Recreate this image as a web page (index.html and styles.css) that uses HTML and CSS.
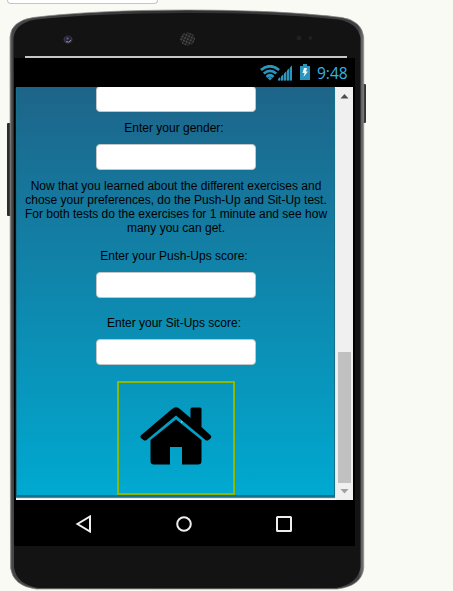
FILE: index.html
```
<!DOCTYPE html>
<html lang="en">
<head>
<meta charset="utf-8">
<title>Fitness test</title>
<link rel="stylesheet" href="styles.css">
</head>
<body>
<div class="selector"></div>
<main class="phone">
  <svg class="shell" width="370" height="591" viewBox="0 0 370 591" aria-hidden="true">
    <defs>
      <linearGradient id="rim" x1="0" x2="1" y1="0" y2="0">
        <stop offset="0" stop-color="#77797a"/><stop offset=".006" stop-color="#454647"/>
        <stop offset=".5" stop-color="#303030"/>
        <stop offset=".985" stop-color="#404044"/><stop offset="1" stop-color="#77797a"/>
      </linearGradient>
      <pattern id="mesh" width="3" height="3" patternUnits="userSpaceOnUse" patternTransform="rotate(25)">
        <rect width="3" height="3" fill="#1a1a1a"/><rect width="1.6" height="2" fill="#4d4d4d"/>
      </pattern>
    </defs>
    <rect x="7" y="123" width="4" height="93" rx="1" fill="#2b2b2b"/>
    <rect x="362" y="84" width="4" height="39" rx="1" fill="#333"/>
    <path d="M10 37Q11 21 33 17.500Q95 10 187 10Q280 10 342 17.500Q362 21 363.700 37V568Q362 586 337 589H36Q13 586 10.500 568Z" fill="url(#rim)" stroke="#858685" stroke-width=".7"/>
    <path d="M13.500 38Q15 23 36 19.500Q98 13 187 13Q278 13 338 19.500Q358 23 360.500 38V567Q358 584 336 588H38Q16 584 14 567Z" fill="#131313"/>
    <path d="M25 57H347" stroke="#c8c6c2" stroke-width="2"/>
    <ellipse cx="68" cy="39.500" rx="4.500" ry="4" fill="#38363d"/>
    <circle cx="68" cy="39" r="3" fill="#222038"/><circle cx="67.500" cy="38.500" r="1.300" fill="#4f5198"/>
    <path d="M66 41.500Q69 43.500 71 40" stroke="#929096" fill="none"/>
    <ellipse cx="187.500" cy="39" rx="7.500" ry="6.500" fill="url(#mesh)"/>
    <circle cx="299" cy="38" r="2.500" fill="#211f1f"/><circle cx="310.500" cy="38" r="2" fill="#211f1f"/>
  </svg>
  <section class="display">
    <header class="status">
      <svg class="wifi" width="20" height="16" viewBox="0 0 20 16" fill="none" stroke="#2b95bd" stroke-width="2.700">
        <path d="M.900 5Q10-2.500 19.100 5M3.800 8.600Q10 3.200 16.200 8.600M6.500 12Q10 8.600 13.500 12"/>
        <path d="M7.700 13Q10 11.200 12.300 13L10 15.500Z" fill="#2b95bd" stroke="none"/>
      </svg>
      <svg class="signal" width="14" height="16" viewBox="0 0 14 16" fill="#2b95bd">
        <path d="M0 15.500L14 .500V15.500Z" opacity=".45"/>
        <path d="M0 15.500V14L2 12V15.500ZM3 15.500V11.500L5 9.500V15.500ZM6 15.500V8.500L8 6.500V15.500ZM9 15.500V5.500L11 3.500V15.500ZM12 15.500V2.500L14 .500V15.500Z"/>
      </svg>
      <svg class="battery" width="10" height="16" viewBox="0 0 10 16">
        <path d="M0 2H3V0H7V2H10V16H0Z" fill="#2b95bd"/><path d="M4 4H7L6 7.500H8L3.500 13L4.500 9H2.500Z" fill="#e5f5fa"/>
      </svg>
      <span class="clock">9:48</span>
    </header>
    <div class="viewport">
      <form class="app">
        <input class="field first" type="text" aria-label="Age">
        <label class="label gender">Enter your gender:</label>
        <input class="field" type="text">
        <p class="note">Now that you learned about the different exercises and<br>chose your preferences, do the Push-Up and Sit-Up test.<br>For both tests do the exercises for 1 minute and see how<br>many you can get.</p>
        <label class="label push">Enter your Push-Ups score:</label>
        <input class="field" type="text">
        <label class="label sit">Enter your Sit-Ups score:</label>
        <input class="field" type="text">
        <button class="home" type="button" aria-label="Home">
          <svg width="72" height="58" viewBox="0 0 72 58">
            <path d="M.800 28.500L32 2Q36 -1.500 40 2L50.500 11V2Q50.500 .500 52 .500H60Q61.500 .500 61.500 2V20L70.800 28.500Q71.800 30 70.500 31.500L68.500 33Q67 34 65.500 33L36 8.500L6.500 33Q5 34 3.500 33L1 31Q0 30 .800 28.500Z"/>
            <path d="M10.500 33L36 12.500L61.500 33V54Q61.500 57.500 58 57.500H42V40H30V57.500H14Q10.500 57.500 10.500 54Z"/>
            <path d="M41 13.500L43 15L41.500 16Z" fill="#9edce8"/>
          </svg>
        </button>
      </form>
      <div class="scrollbar">
        <svg width="17" height="17" viewBox="0 0 17 17"><path d="M4.500 11.500L8.500 7L12.500 11.500Z" fill="#4d4d4d"/></svg>
        <span class="thumb"></span>
        <svg width="17" height="17" viewBox="0 0 17 17"><path d="M4.500 6L8.500 10.500L12.500 6Z" fill="#a0a0a0"/></svg>
      </div>
    </div>
    <nav class="nav">
      <svg width="18" height="18" viewBox="0 0 18 18"><path d="M15 1.500V16.500L2.500 9Z"/></svg>
      <svg width="18" height="18" viewBox="0 0 18 18"><circle cx="9" cy="9" r="6.800"/></svg>
      <svg width="18" height="18" viewBox="0 0 18 18"><rect x="2" y="2" width="14" height="14" rx=".500"/></svg>
    </nav>
  </section>
</main>
</body>
</html>
```
FILE: styles.css
```
* { box-sizing: border-box; }
body {
  margin: 0;
  height: 591px;
  overflow: hidden;
  background: #f9faf3;
  font: 12px/14px "Liberation Sans", Arial, sans-serif;
}
svg { display: block; flex: none; }
.selector {
  width: 151px;
  height: 4px;
  margin-left: 7px;
  background: #fff;
  border: 1px solid #c5c5c5;
  border-top: 0;
  border-radius: 0 0 4px 4px;
}
.phone { position: relative; padding: 54px 0 0 14px; }
.shell { position: absolute; left: 0; top: -4px; }
.display {
  position: relative;
  width: 341px;
  height: 488px;
  background: #000;
}
.status {
  display: flex;
  height: 29px;
  padding: 7px 7px 0 246px;
}
.signal { margin-left: -2px; }
.battery { margin-left: 8px; margin-top: -1px; }
.clock {
  margin-left: 7px;
  color: #33b5e5;
  font: 15.5px/16px "Open Sans", Roboto, sans-serif;
  white-space: nowrap;
}
.viewport {
  display: flex;
  justify-content: space-between;
  width: 337px;
  height: 413px;
  margin-left: 2px;
  background: #fff;
}
.app {
  display: flex;
  flex-direction: column;
  align-items: center;
  width: 319px;
  height: 410px;
  overflow: hidden;
  border: solid #176f8b;
  border-width: 0 1px 2px;
  background: linear-gradient(#1e6489, #00a9d0);
  box-shadow: 0 1px 1px #777;
}
.field {
  flex: none;
  width: 160px;
  height: 26px;
  margin: 0 0 0 1px;
  padding: 0 6px;
  border: 1px solid #c5c5c5;
  border-radius: 4px;
  background: #fff;
}
.first { margin-top: -1px; }
.label { flex: none; height: 14px; margin-right: 3px; }
.gender { margin: 9px 3px 9px 0; }
.note {
  flex: none;
  margin: 9px 0 14px 1px;
  text-align: center;
  white-space: nowrap;
}
.push { margin-bottom: 9px; }
.sit { margin: 18px 3px 9px 0; }
.home {
  flex: none;
  width: 118px;
  height: 114px;
  margin: 16px 0 0;
  padding: 0 0 4px 21px;
  border: 2px solid #91b800;
  background: none;
}
.scrollbar { width: 17px; background: #f0f0f0; }
.thumb {
  display: block;
  width: 13px;
  height: 131px;
  margin: 248px 0 0 2px;
  background: #c1c1c1;
}
.nav {
  display: flex;
  justify-content: space-between;
  padding: 15px 62px 0 61px;
  fill: none;
  stroke: #eee;
  stroke-width: 2;
}
```
